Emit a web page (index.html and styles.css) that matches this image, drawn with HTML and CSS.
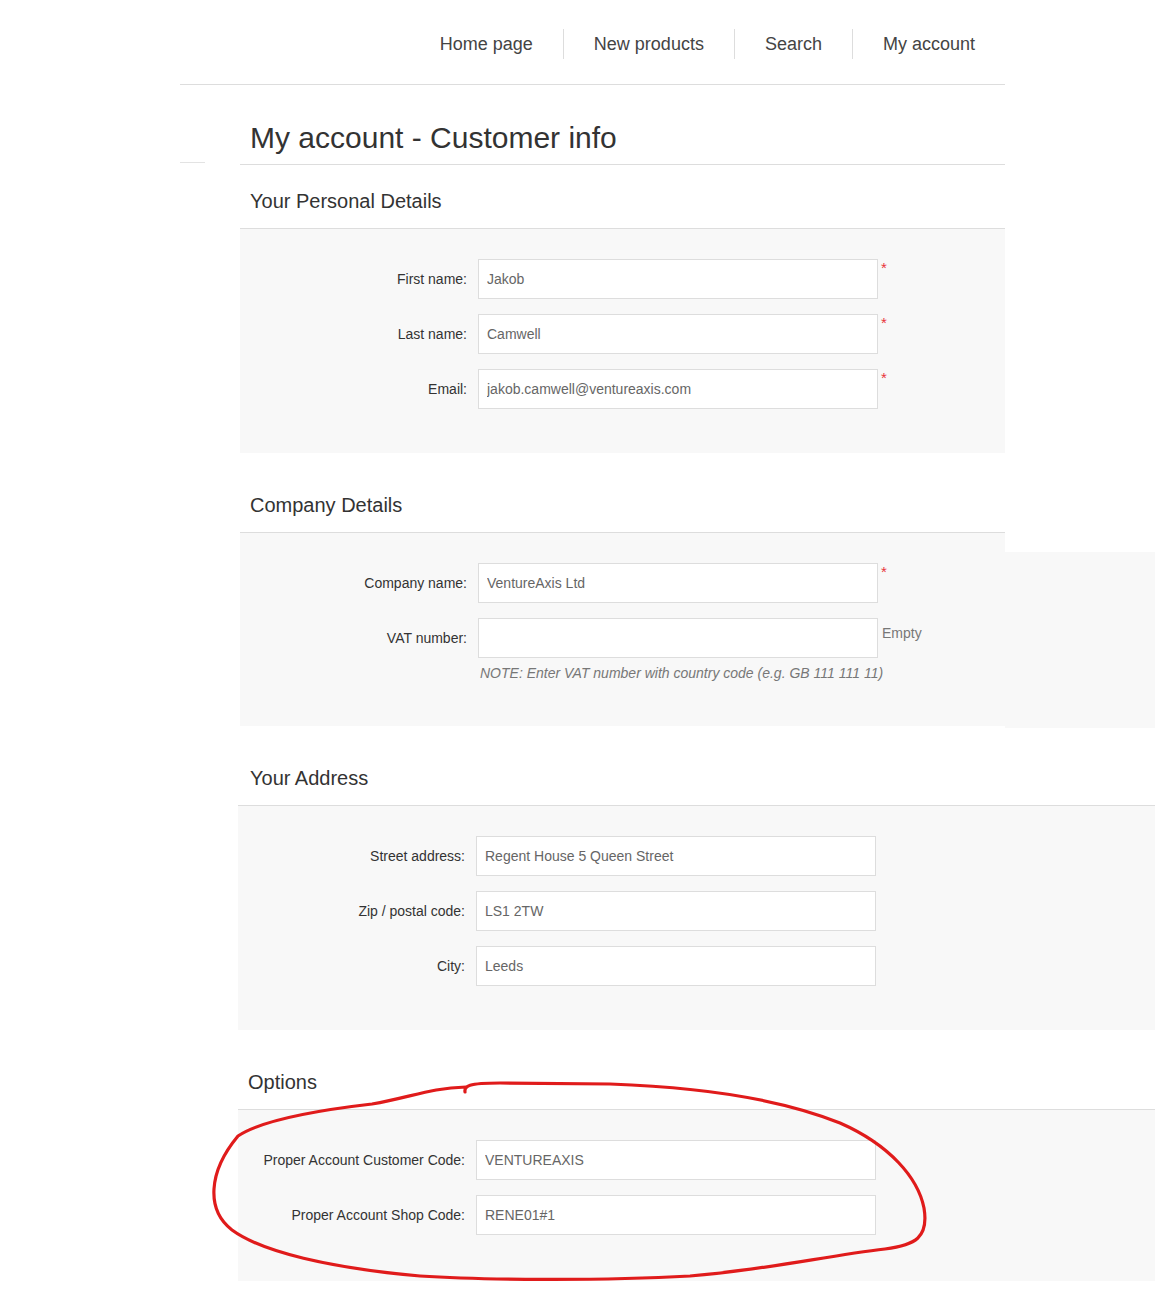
FILE: index.html
```html
<!DOCTYPE html>
<html lang="en">
<head>
<meta charset="utf-8">
<title>My account - Customer info</title>
<link rel="stylesheet" href="styles.css">
</head>
<body>
<div class="page">
  <div class="top">
    <nav class="topnav">
      <a class="nav-item" href="#">Home page</a>
      <a class="nav-item" href="#">New products</a>
      <a class="nav-item" href="#">Search</a>
      <a class="nav-item" href="#">My account</a>
    </nav>
    <div class="title-row">
      <div class="stub"></div>
      <h1 class="page-title">My account - Customer info</h1>
    </div>
  </div>

  <section class="section narrow">
    <h2 class="section-head">Your Personal Details</h2>
    <div class="panel">
      <div class="row"><label class="lbl">First name:</label><input class="field" value="Jakob"><span class="req">*</span></div>
      <div class="row"><label class="lbl">Last name:</label><input class="field" value="Camwell"><span class="req">*</span></div>
      <div class="row"><label class="lbl">Email:</label><input class="field" value="jakob.camwell@ventureaxis.com"><span class="req">*</span></div>
    </div>
  </section>

  <section class="section narrow">
    <h2 class="section-head">Company Details</h2>
    <div class="panel panel-ext">
      <div class="row"><label class="lbl">Company name:</label><input class="field" value="VentureAxis Ltd"><span class="req">*</span></div>
      <div class="row"><label class="lbl">VAT number:</label><input class="field" value=""><span class="hint">Empty</span></div>
      <p class="note">NOTE: Enter VAT number with country code (e.g. GB 111 111 11)</p>
    </div>
  </section>

  <section class="section wide">
    <h2 class="section-head head-addr">Your Address</h2>
    <div class="panel">
      <div class="row"><label class="lbl">Street address:</label><input class="field" value="Regent House 5 Queen Street"></div>
      <div class="row"><label class="lbl">Zip / postal code:</label><input class="field" value="LS1 2TW"></div>
      <div class="row"><label class="lbl">City:</label><input class="field" value="Leeds"></div>
    </div>
  </section>

  <section class="section wide">
    <h2 class="section-head">Options</h2>
    <div class="panel panel-opt">
      <div class="row"><label class="lbl">Proper Account Customer Code:</label><input class="field" value="VENTUREAXIS"></div>
      <div class="row"><label class="lbl">Proper Account Shop Code:</label><input class="field" value="RENE01#1"></div>
    </div>
  </section>

  <svg class="scribble" viewBox="0 0 1155 1305" width="1155" height="1305" aria-hidden="true">
    <path d="M 465 1092 C 464 1086, 468 1083, 500 1083 L 610 1084 C 700 1087, 780 1099, 840 1123 C 890 1145, 918 1178, 924 1208 C 929 1238, 915 1245, 885 1249 C 825 1256, 765 1270, 690 1276 C 600 1281, 480 1280, 420 1276 C 330 1268, 262 1252, 232 1230 C 206 1210, 208 1172, 238 1136 C 262 1120, 320 1110, 372 1104 C 412 1097, 430 1088, 466 1087" fill="none" stroke="#e01b1b" stroke-width="3.2" stroke-linecap="round" stroke-linejoin="round"/>
  </svg>
</div>
</body>
</html>
```

FILE: styles.css
```css
html, body {
  margin: 0;
  padding: 0;
  background: #ffffff;
}

body {
  font-family: "Liberation Sans", Arial, sans-serif;
  color: #333333;
}

.page {
  position: relative;
  width: 1155px;
  min-height: 1305px;
}

.top {
  margin-left: 180px;
  width: 825px;
}

.topnav {
  display: flex;
  justify-content: flex-end;
  align-items: center;
  box-sizing: border-box;
  height: 85px;
  padding-top: 3px;
  border-bottom: 1px solid #dddddd;
}

.nav-item {
  display: block;
  padding: 0 30px;
  line-height: 30px;
  font-size: 18px;
  color: #444444;
  text-decoration: none;
}

.nav-item + .nav-item {
  border-left: 1px solid #dddddd;
}

.title-row {
  display: flex;
}

.stub {
  width: 25px;
  height: 77px;
  border-bottom: 1px solid #e3e3e3;
  margin-right: 35px;
  flex: none;
}

.page-title {
  flex: 1;
  margin: 0;
  padding: 35px 0 8px 10px;
  font-size: 30px;
  line-height: 36px;
  font-weight: normal;
  color: #333333;
  border-bottom: 1px solid #dddddd;
}

.section {
  margin-top: 16px;
}

.narrow {
  margin-left: 240px;
  width: 765px;
}

.narrow:first-of-type {
  margin-top: 0;
}

.wide {
  margin-left: 238px;
  width: 917px;
}

.section-head {
  margin: 0;
  padding: 24px 0 15px 10px;
  font-size: 20px;
  line-height: 24px;
  font-weight: normal;
  color: #333333;
  border-bottom: 1px solid #dddddd;
}

.head-addr {
  padding-left: 12px;
}

.panel {
  background: #f8f8f8;
  padding: 30px 0 44px 0;
  display: flex;
  flex-direction: column;
  gap: 15px;
}

.panel-ext {
  position: relative;
  padding-bottom: 45px;
}

.panel-ext::after {
  content: "";
  position: absolute;
  left: 100%;
  top: 19px;
  bottom: -2px;
  width: 150px;
  background: #f8f8f8;
}

.panel-opt {
  padding-bottom: 46px;
}

.row {
  display: flex;
  align-items: center;
}

.lbl {
  width: 227px;
  flex: none;
  text-align: right;
  font-size: 14px;
  line-height: 16px;
  color: #333333;
  margin-right: 11px;
}

.field {
  width: 400px;
  height: 40px;
  box-sizing: border-box;
  border: 1px solid #dddddd;
  background: #ffffff;
  padding: 0 8px;
  margin: 0;
  font-family: "Liberation Sans", Arial, sans-serif;
  font-size: 14px;
  color: #666666;
  outline: none;
  border-radius: 0;
}

.req {
  align-self: flex-start;
  margin-left: 3px;
  margin-top: 1px;
  font-size: 15px;
  line-height: 15px;
  color: #e8343b;
}

.hint {
  align-self: flex-start;
  margin-left: 4px;
  margin-top: 7px;
  font-size: 14px;
  line-height: 16px;
  color: #777777;
}

.note {
  margin: -8px 0 0 240px;
  font-size: 14px;
  line-height: 16px;
  font-style: italic;
  color: #777777;
}

.scribble {
  position: absolute;
  left: 0;
  top: 0;
  pointer-events: none;
}
```
